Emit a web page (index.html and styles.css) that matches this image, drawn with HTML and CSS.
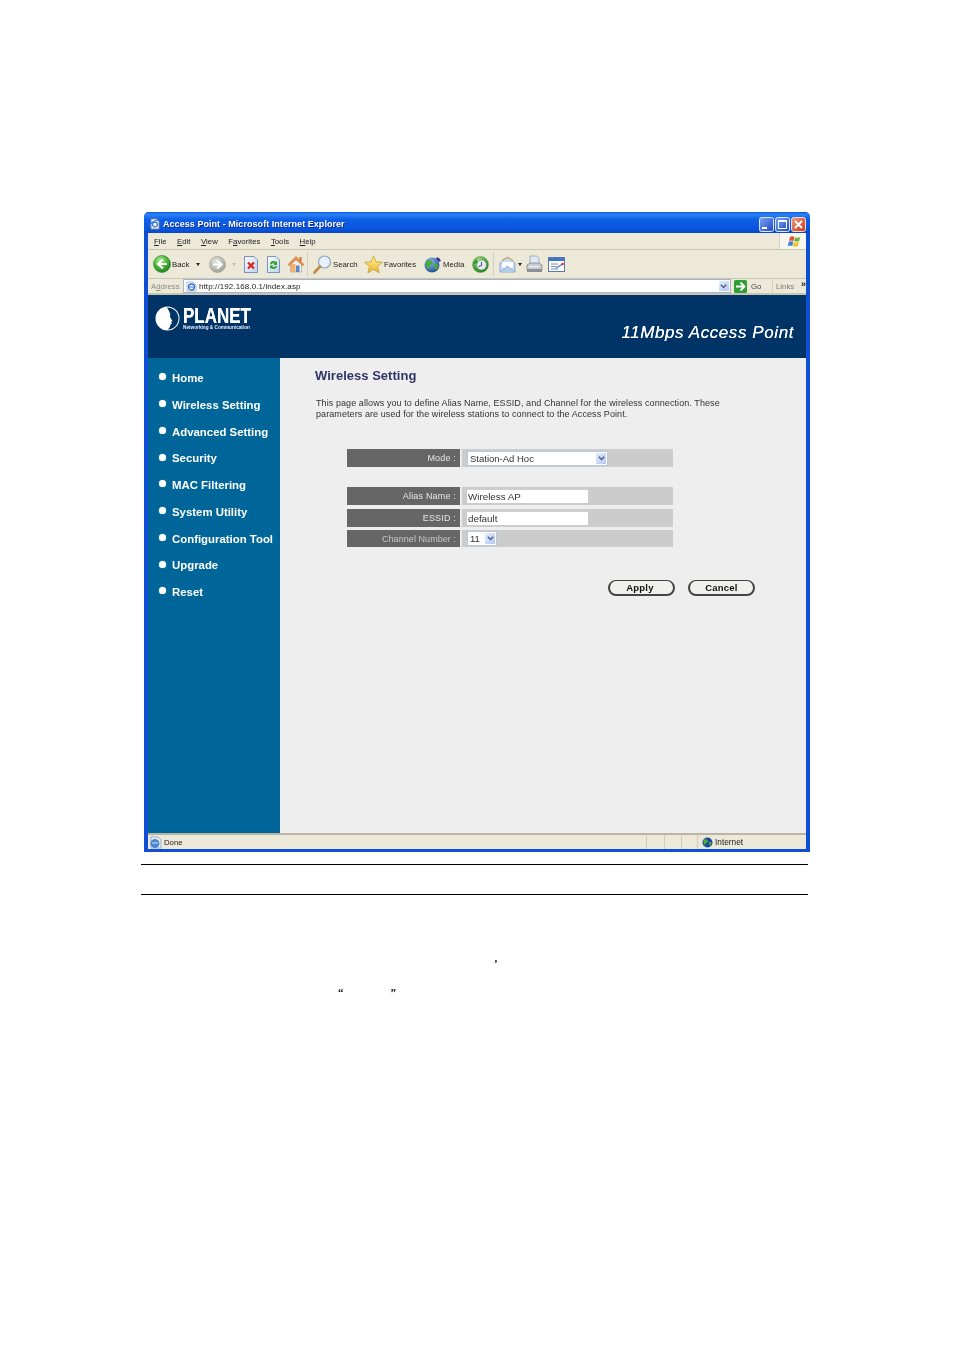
FILE: index.html
```html
<!DOCTYPE html>
<html lang="en">
<head>
<meta charset="utf-8">
<title>Access Point - Microsoft Internet Explorer</title>
<link rel="stylesheet" href="styles.css">
</head>
<body>
<svg class="defs" width="0" height="0" aria-hidden="true">
  <defs>
    <radialGradient id="gGreen" cx=".4" cy=".3" r=".8"><stop offset="0" stop-color="#b6ec9a"/><stop offset=".55" stop-color="#3fae2e"/><stop offset="1" stop-color="#17701a"/></radialGradient>
    <radialGradient id="gGrey" cx=".4" cy=".3" r=".8"><stop offset="0" stop-color="#e4e4de"/><stop offset="1" stop-color="#9a9a92"/></radialGradient>
    <radialGradient id="gGlobe" cx=".4" cy=".3" r=".8"><stop offset="0" stop-color="#8fc0ee"/><stop offset="1" stop-color="#123f8f"/></radialGradient>
    <linearGradient id="gStar" x1="0" y1="0" x2="0" y2="1"><stop offset="0" stop-color="#fff6a0"/><stop offset="1" stop-color="#eeb52a"/></linearGradient>
    <linearGradient id="gDoc" x1="0" y1="0" x2="1" y2="1"><stop offset="0" stop-color="#ffffff"/><stop offset="1" stop-color="#bcd0ee"/></linearGradient>
    <linearGradient id="gBtn" x1="0" y1="0" x2="1" y2="1"><stop offset="0" stop-color="#7fa4f0"/><stop offset="1" stop-color="#1c49c8"/></linearGradient>
    <linearGradient id="gClose" x1="0" y1="0" x2="1" y2="1"><stop offset="0" stop-color="#f0a080"/><stop offset="1" stop-color="#c8381a"/></linearGradient>
  </defs>
</svg>
<div class="page">
  <div class="window">
    <div class="titlebar">
      <svg class="ti" width="12" height="12" viewBox="0 0 12 12"><path d="M2 1h6l2 2v8H2z" fill="#fff" stroke="#789"/><path d="M1 8a5 2 -30 0 1 9-5" fill="none" stroke="#3a76d8" stroke-width="1.4"/><circle cx="6" cy="6.5" r="2.4" fill="none" stroke="#3a76d8" stroke-width="1.3"/></svg>
      <span class="title">Access Point - Microsoft Internet Explorer</span>
      <div class="wctl">
        <svg width="15" height="15" viewBox="0 0 15 15"><rect x=".5" y=".5" width="14" height="14" rx="2" fill="url(#gBtn)" stroke="#dfe8fb"/><rect x="3" y="10" width="5" height="2" fill="#fff"/></svg>
        <svg width="15" height="15" viewBox="0 0 15 15"><rect x=".5" y=".5" width="14" height="14" rx="2" fill="url(#gBtn)" stroke="#dfe8fb"/><rect x="3.5" y="3.5" width="8" height="8" fill="none" stroke="#fff"/><rect x="3.5" y="3.5" width="8" height="1.5" fill="#fff"/></svg>
        <svg width="15" height="15" viewBox="0 0 15 15"><rect x=".5" y=".5" width="14" height="14" rx="2" fill="url(#gClose)" stroke="#f2dcd4"/><path d="M4 4l7 7M11 4l-7 7" stroke="#fff" stroke-width="1.8"/></svg>
      </div>
    </div>
    <div class="menubar">
      <span class="m"><u>F</u>ile</span>
      <span class="m"><u>E</u>dit</span>
      <span class="m"><u>V</u>iew</span>
      <span class="m">F<u>a</u>vorites</span>
      <span class="m"><u>T</u>ools</span>
      <span class="m"><u>H</u>elp</span>
      <div class="flagbox">
        <svg width="14" height="13" viewBox="0 0 14 13"><path d="M2 2q2-1.500 4.500 0L5.500 6q-2.500-1.200-4.500 0z" fill="#e2532a"/><path d="M7.200 2.400q2.500 1 5 -.4L11.200 6q-2.500 1.200-5 .2z" fill="#6eb43f"/><path d="M.8 6.800q2.300-1.200 4.500 0L4.300 11q-2.300-1.200-4.500 0z" fill="#3d7ed8"/><path d="M6 7.300q2.500 1 5-.3L10 11q-2.500 1.200-5 .3z" fill="#f4c21f"/></svg>
      </div>
    </div>
    <div class="toolbar">
      <svg class="i-back" width="18" height="18" viewBox="0 0 18 18"><circle cx="9" cy="9" r="8.500" fill="url(#gGreen)" stroke="#2a7f2a" stroke-width=".6"/><path d="M10 4.500L5 9l5 4.500M5.500 9H14" fill="none" stroke="#fff" stroke-width="2.200"/></svg>
      <span class="tb t-back">Back</span>
      <span class="caret c-back"></span>
      <svg class="i-fwd" width="17" height="17" viewBox="0 0 17 17"><circle cx="8.500" cy="8.500" r="8" fill="url(#gGrey)" stroke="#97978f" stroke-width=".6"/><path d="M8 4.500L12.500 8.500 8 12.500M12 8.500H4" fill="none" stroke="#fff" stroke-width="2"/></svg>
      <span class="caret pale c-fwd"></span>
      <svg class="i-stop" width="14" height="17" viewBox="0 0 14 17"><path d="M.5.500h9.500l3.500 3.500v12.500H.5z" fill="url(#gDoc)" stroke="#7a92c0"/><path d="M4 6.500l6 6M10 6.500l-6 6" stroke="#d8261a" stroke-width="2.200"/></svg>
      <svg class="i-ref" width="13" height="17" viewBox="0 0 13 17"><path d="M.5.500h8.500l3.500 3.500v12.500H.5z" fill="url(#gDoc)" stroke="#7a92c0"/><path d="M3 8a3.500 3.500 0 0 1 6-2l1-1v4H6.500l1-1a2 2 0 0 0-3 .5zM10 10a3.500 3.500 0 0 1-6 2l-1 1V9.500h3.500l-1 1a2 2 0 0 0 3-.5z" fill="#2ea32e"/></svg>
      <svg class="i-home" width="18" height="18" viewBox="0 0 18 18"><path d="M3.500 9.500L9 4.500l5.500 5v7.500h-11z" fill="#f3efe6" stroke="#8a9ab8" stroke-width=".6"/><path d="M1 9.500L9 1.500l8 8-1.500 1.200L9 4.500 2.500 10.700z" fill="#e8924a" stroke="#b46a30" stroke-width=".5"/><rect x="9" y="10.500" width="3.500" height="6.500" fill="#5e88c4"/><rect x="3.500" y="9" width="5" height="8" fill="#f0b070"/><rect x="12.500" y="2" width="2" height="4" fill="#c8703a"/></svg>
      <span class="sep s-a"></span>
      <svg class="i-search" width="19" height="19" viewBox="0 0 19 19"><circle cx="11.500" cy="7" r="6" fill="#e6f1fb" stroke="#8da6c4" stroke-width="1.200"/><path d="M7 11.500L1.500 17.500" stroke="#c08a48" stroke-width="2.600" stroke-linecap="round"/></svg>
      <span class="tb t-search">Search</span>
      <svg class="i-star" width="19" height="19" viewBox="0 0 19 19"><path d="M9.500 .8l2.500 6 6.400.5-4.900 4.200 1.600 6.300-5.600-3.400-5.600 3.400 1.600-6.300L.6 7.300 7 6.800z" fill="url(#gStar)" stroke="#b8942a" stroke-width=".7"/></svg>
      <span class="tb t-fav">Favorites</span>
      <svg class="i-media" width="18" height="17" viewBox="0 0 18 17"><circle cx="8" cy="9" r="7.500" fill="url(#gGlobe)"/><path d="M3 5q3-2 5 0t-1 4 -1 5q-3-1-4-4t1-5zM10 8q3-1 4 1t-2 5q-2-1-2-6z" fill="#4fa83c"/><path d="M13 1q3 1 4 4l-2 1q-1-2-3-3z" fill="#3b2f8f"/></svg>
      <span class="tb t-media">Media</span>
      <svg class="i-hist" width="17" height="17" viewBox="0 0 17 17"><circle cx="8.500" cy="8.500" r="8" fill="url(#gGreen)" stroke="#6b8a5a" stroke-width=".5"/><circle cx="9.500" cy="9" r="5" fill="#e4eaf0" stroke="#6d7a8a" stroke-width=".6"/><path d="M9.500 6v3.500l-3 1" fill="none" stroke="#3a4a6a" stroke-width="1"/><path d="M1 8l3-5 2 4z" fill="#2e8f2e"/></svg>
      <span class="sep s-b"></span>
      <svg class="i-mail" width="17" height="17" viewBox="0 0 17 17"><path d="M1 7L8.500 1 16 7v9H1z" fill="#c9dcf4" stroke="#7d9cc8" stroke-width=".8"/><path d="M3 6h11v5l-5.500 3L3 11z" fill="#fbfcff"/><path d="M1 16l7.500-6 7.500 6" fill="#b4ccec" stroke="#7d9cc8" stroke-width=".6"/><path d="M3 4l5.500-2.500L14 4" fill="none" stroke="#e3a13a" stroke-width="1"/></svg>
      <span class="caret c-mail"></span>
      <svg class="i-print" width="17" height="18" viewBox="0 0 17 18"><path d="M4 1h7l2 2v6H4z" fill="#dfe8f4" stroke="#8b9ab0" stroke-width=".7"/><path d="M1 10l3-2h9l3 2v5H1z" fill="#c8cbd0" stroke="#7d8088" stroke-width=".7"/><path d="M1 14h15v3H1z" fill="#8d9098"/><rect x="3" y="11" width="10" height="1.200" fill="#f2f2f2"/></svg>
      <svg class="i-edit" width="17" height="15" viewBox="0 0 17 15"><rect x=".5" y=".5" width="16" height="14" fill="#fff" stroke="#5578b0"/><rect x="1" y="1" width="15" height="3" fill="#3f74c8"/><path d="M3 7h7M3 9.500h5M3 12h7" stroke="#6d8dc0" stroke-width="1"/><path d="M8 11l6-3.500" stroke="#3a7fc8" stroke-width="1.400"/><circle cx="14.500" cy="7" r="1.300" fill="#d8301f"/></svg>
    </div>
    <div class="addressbar">
      <span class="addr-label">A<u>d</u>dress</span>
      <div class="addr-field">
        <svg width="11" height="11" viewBox="0 0 11 11"><path d="M1 1h6l3 3v6H1z" fill="#fff" stroke="#8a9ab8" stroke-width=".7"/><circle cx="5.500" cy="6" r="3" fill="none" stroke="#2f6fd0" stroke-width="1.300"/><path d="M2.500 6h6" stroke="#2f6fd0"/></svg>
        <span class="url">http://192.168.0.1/index.asp</span>
        <span class="ddbtn ddbtn-addr"><svg width="7" height="5" viewBox="0 0 7 5"><path d="M.8.800L3.500 3.500 6.200.800" fill="none" stroke="#4d6185" stroke-width="1.500"/></svg></span>
      </div>
      <svg class="i-go" width="13" height="13" viewBox="0 0 13 13"><rect width="13" height="13" rx="1.500" fill="#2f9e33"/><path d="M2 6.500h8M6.500 2.500L10.500 6.500 6.500 10.500" fill="none" stroke="#fff" stroke-width="1.800"/></svg>
      <span class="go">Go</span>
      <span class="sep-addr"></span>
      <span class="links">Links</span>
      <span class="chev">»</span>
    </div>
    <div class="viewport">
      <header class="banner">
        <div class="logo">
          <svg width="25" height="25" viewBox="0 0 25 25"><circle cx="12.500" cy="12.500" r="12" fill="#fff"/><path d="M12 1.500a11 11 0 0 1 1 22q2.500-2.500 2.500-5l1.500-1-1-1.500 1.500-1-2.500-4q.5-4-1-6-1-2-2-3.500z" fill="#003366"/></svg>
          <div class="logotext">
            <span class="planet">PLANET</span>
            <span class="tag">Networking &amp; Communication</span>
          </div>
        </div>
        <div class="product">11Mbps Access Point</div>
      </header>
      <div class="body">
        <nav class="side">
          <a class="nav">Home</a>
          <a class="nav">Wireless Setting</a>
          <a class="nav">Advanced Setting</a>
          <a class="nav">Security</a>
          <a class="nav">MAC Filtering</a>
          <a class="nav">System Utility</a>
          <a class="nav">Configuration Tool</a>
          <a class="nav">Upgrade</a>
          <a class="nav">Reset</a>
        </nav>
        <main class="main">
          <h1>Wireless Setting</h1>
          <p class="desc">This page allows you to define Alias Name, ESSID, and Channel for the wireless connection. These<br>parameters are used for the wireless stations to connect to the Access Point.</p>
          <div class="form">
            <div class="row row-mode">
              <div class="lab">Mode :</div>
              <div class="val"><div class="select sel-mode"><span>Station-Ad Hoc</span><span class="ddbtn"><svg width="7" height="5" viewBox="0 0 7 5"><path d="M.8.800L3.500 3.500 6.200.800" fill="none" stroke="#4d6185" stroke-width="1.500"/></svg></span></div></div>
            </div>
            <div class="row">
              <div class="lab">Alias Name :</div>
              <div class="val"><div class="input">Wireless AP</div></div>
            </div>
            <div class="row">
              <div class="lab">ESSID :</div>
              <div class="val"><div class="input">default</div></div>
            </div>
            <div class="row row-ch">
              <div class="lab lab-ch">Channel Number :</div>
              <div class="val"><div class="select sel-ch"><span>11</span><span class="ddbtn"><svg width="7" height="5" viewBox="0 0 7 5"><path d="M.8.800L3.500 3.500 6.200.800" fill="none" stroke="#4d6185" stroke-width="1.500"/></svg></span></div></div>
            </div>
          </div>
          <div class="actions">
            <button class="btn btn-apply" type="button">Apply</button>
            <button class="btn" type="button">Cancel</button>
          </div>
        </main>
      </div>
    </div>
    <div class="statusbar">
      <svg width="13" height="13" viewBox="0 0 13 13"><path d="M2 1h7l3 3v8H2z" fill="#eaf1fa" stroke="#7d93b8" stroke-width=".7"/><circle cx="6" cy="7.500" r="4.500" fill="#4a86d0"/><path d="M3 7h6" stroke="#dbe8f6"/></svg>
      <span class="st-done">Done</span>
      <span class="cell c1"></span><span class="cell c2"></span><span class="cell c3"></span>
      <span class="cell c4">
        <svg width="11" height="11" viewBox="0 0 11 11"><circle cx="5.500" cy="5.500" r="5" fill="#17479e"/><path d="M2 3q2-2 3.500 0T4.500 6 4 9Q2 8 1.500 6T2 3zM7 5q2-.5 2.500.5T8 9Q7 8 7 5z" fill="#4fa83c"/></svg>
        <span>Internet</span>
      </span>
      <span class="grip"></span>
    </div>
  </div>
  <div class="rule rule-a"></div>
  <div class="rule rule-b"></div>
  <p class="gl gl-a">’</p>
  <p class="gl gl-b"><span>“</span><span class="gl-close">”</span></p>
</div>
</body>
</html>
```
FILE: styles.css
```css
* { box-sizing: border-box; }
html, body { margin: 0; padding: 0; background: #fff; }
.defs { position: absolute; }
.page { width: 954px; height: 1349px; padding: 212px 0 0 141px; overflow: hidden; font-family: "Liberation Sans", Arial, sans-serif; }
.window { width: 666px; height: 640px; margin-left: 3px; background: #0f4fd8; padding: 0 4px 3px 4px; border-radius: 5px 5px 0 0; display: flex; flex-direction: column; filter: blur(.3px); }

.titlebar { height: 21px; flex: none; margin: 0 -4px; padding: 3px 4px 0 5px; display: flex; align-items: center; border-radius: 5px 5px 0 0; background: linear-gradient(#0a5ae6 0, #2c82f5 12%, #0e5fe6 35%, #0a55df 80%, #0a48c0 100%); }
.ti { flex: none; }
.title { margin-left: 2px; color: #fff; font-weight: bold; font-size: 9px; letter-spacing: .05px; text-shadow: 1px 1px 0 #0a2f90; }
.wctl { margin-left: auto; display: flex; gap: 1px; }

.menubar { height: 17px; flex: none; background: #ece9d8; border-bottom: 1px solid #c9c6b4; display: flex; align-items: center; gap: 10.500px; padding-left: 6px; font-size: 7.800px; color: #222; }
.flagbox { margin-left: auto; width: 27px; height: 16px; padding-left: 3px; background: #f7f6f0; border-left: 1px solid #d8d5c4; display: flex; align-items: center; justify-content: center; }

.toolbar { height: 29px; flex: none; background: #ece9d8; border-bottom: 1px solid #c9c6b4; display: flex; align-items: center; font-size: 7.800px; color: #222; }
.toolbar svg { flex: none; }
.tb { flex: none; }
.caret { flex: none; width: 0; height: 0; border: 2.500px solid transparent; border-top: 3px solid #222; border-bottom: 0; }
.caret.pale { border-top-color: #bbb; }
.sep { flex: none; width: 1px; height: 24px; background: #d4d0bc; }
.i-back { margin-left: 5px; }
.t-back { margin-left: 1px; width: 18px; }
.c-back { margin-left: 6px; }
.i-fwd { margin-left: 9px; }
.c-fwd { margin-left: 6px; }
.i-stop { margin-left: 8px; }
.i-ref { margin-left: 9px; }
.i-home { margin-left: 7px; }
.s-a { margin-left: 2px; }
.i-search { margin-left: 5px; }
.t-search { margin-left: 1px; width: 25px; }
.i-star { margin-left: 6px; }
.t-fav { margin-left: 1px; width: 32px; }
.i-media { margin-left: 8px; }
.t-media { margin-left: 1px; width: 21px; }
.i-hist { margin-left: 8px; }
.s-b { margin-left: 4px; }
.i-mail { margin-left: 5px; }
.c-mail { margin-left: 2px; }
.i-print { margin-left: 4px; }
.i-edit { margin-left: 5px; }

.addressbar { height: 16px; flex: none; background: #ece9d8; border-bottom: 2px solid #c8c5b4; display: flex; align-items: center; font-size: 7.800px; color: #222; }
.addr-label { margin-left: 3px; width: 32px; color: #8a8a80; }
.addr-field { width: 548px; height: 14px; background: #fff; border: 1px solid #a5b4cc; display: flex; align-items: center; padding-left: 2px; }
.url { margin-left: 2px; font-size: 8px; letter-spacing: .1px; }
.ddbtn { margin-left: auto; width: 12px; height: 100%; display: flex; align-items: center; justify-content: center; background: linear-gradient(135deg, #e6eefc, #b2c7f0); border: 1px solid #fff; flex: none; }
.i-go { margin-left: 3px; flex: none; }
.go { margin-left: 4px; width: 21px; color: #444; }
.sep-addr { width: 1px; height: 13px; background: #d4d0bc; }
.links { margin-left: 3px; width: 25px; color: #777; }
.chev { font-size: 9px; font-weight: bold; align-self: flex-start; color: #222; }

.viewport { flex: 1; display: flex; flex-direction: column; min-height: 0; background: #eee; }
.banner { height: 63px; flex: none; background: #003366; display: flex; justify-content: space-between; }
.logo { display: flex; margin: 11px 0 0 7px; gap: 3px; }
.logotext { display: flex; flex-direction: column; }
.planet { color: #fff; font-weight: bold; font-size: 21.500px; line-height: 18px; margin-top: 1px; transform: scaleX(.79); transform-origin: left center; text-shadow: 0 0 .5px #fff; }
.tag { color: #e8eef8; font-weight: bold; font-size: 4.700px; line-height: 6px; }
.product { margin: 28px 12px 0 0; color: #fff; font-style: italic; font-size: 17px; line-height: 20px; letter-spacing: .58px; text-shadow: 0 0 .6px #fff; }

.body { flex: 1; display: flex; min-height: 0; }
.side { width: 132px; flex: none; background: #006699; padding-top: 6.750px; display: flex; flex-direction: column; }
.nav { height: 26.750px; display: flex; align-items: center; padding-left: 24px; color: #fff; font-weight: bold; font-size: 11.400px; position: relative; }
.nav::before { content: ""; position: absolute; left: 11px; top: 8.500px; width: 7px; height: 7px; border-radius: 50%; background: #fff; box-shadow: 0 0 1px #c0d4e0; }
.main { flex: 1; padding: 9px 0 0 35px; background: #eee; }
h1 { margin: 0; font-size: 13px; line-height: 17px; color: #333366; font-weight: bold; letter-spacing: .02px; }
.desc { margin: 14px 0 0 1px; font-size: 9px; line-height: 11px; color: #333; letter-spacing: .08px; width: 440px; white-space: nowrap; }

.form { margin: 29px 0 0 32px; width: 326px; display: flex; flex-direction: column; gap: 3.500px; }
.row { display: flex; height: 18px; }
.row-mode { margin-bottom: 16.500px; }
.row-ch { height: 17px; }
.lab { width: 113px; flex: none; background: #666; color: #e6e6e6; font-size: 9px; display: flex; align-items: center; justify-content: flex-end; padding-right: 4px; letter-spacing: .18px; }
.lab-ch { color: #c8c8c8; letter-spacing: .06px; }
.val { flex: 1; margin-left: 1px; padding-left: 5px; background: #ccc; display: flex; align-items: center; border-left: 1px solid #e6e6e6; }
.input { width: 121px; height: 14px; background: #fff; font-size: 9.800px; color: #333; display: flex; align-items: center; padding-left: 1px; border-top: 1px solid #d0d0d0; }
.select { height: 15px; background: #fff; display: flex; align-items: center; font-size: 9.500px; color: #333; padding-left: 2px; border: 1px solid #bcc6d8; }
.sel-mode { width: 141px; }
.sel-ch { width: 30px; }

.actions { margin: 33px 0 0 293px; display: flex; gap: 13px; }
.btn { width: 67px; height: 16px; padding: 0; background: #f0f0ee; color: #111; font: bold 9.500px "Liberation Sans", Arial, sans-serif; letter-spacing: .2px; border: 1px solid #444; border-width: 1px 2px 2px 2px; border-radius: 8px; }
.btn-apply { padding-right: 3px; }

.statusbar { height: 16px; flex: none; background: #ece9d8; border-top: 2px solid #b8b5a4; display: flex; align-items: center; font-size: 7.800px; color: #222; padding-left: 1px; }
.st-done { margin-left: 2px; width: 483px; }
.cell { height: 100%; border-left: 1px solid #cfccb8; flex: none; }
.c1 { width: 18px; }
.c2 { width: 17px; }
.c3 { width: 16px; }
.c4 { width: 109px; display: flex; align-items: center; padding-left: 4px; gap: 2px; font-size: 8.300px; }
.grip { flex: 1; }

.rule { width: 667px; height: 1px; background: #000; }
.rule-a { margin-top: 12px; }
.rule-b { margin-top: 29px; }
.gl { margin: 0; font: bold 11px/10px "Liberation Serif", serif; color: #111; filter: blur(.3px); }
.gl-a { margin: 63px 0 0 353px; }
.gl-b { margin: 19px 0 0 197px; display: flex; }
.gl-close { margin-left: 47px; }
```
